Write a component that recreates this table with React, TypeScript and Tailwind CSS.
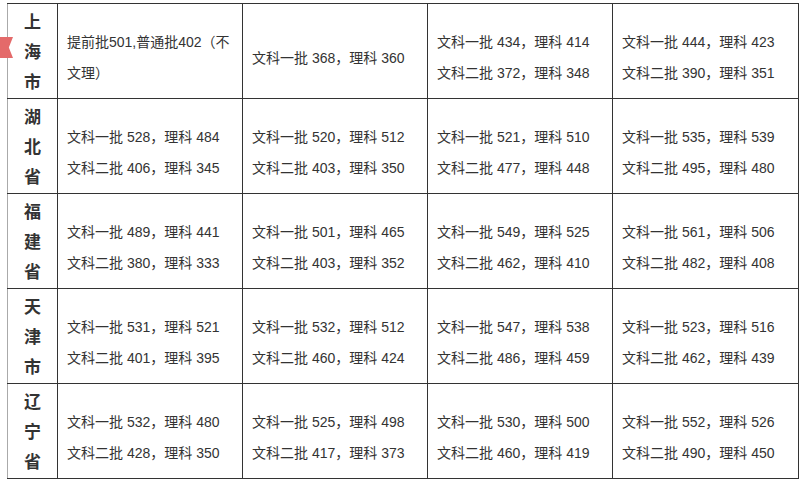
import React from 'react'

type Row = {
  name: string[]
  cells: string[][]
}

const rows: Row[] = [
  {
    name: ['上', '海', '市'],
    cells: [
      ['提前批501,普通批402（不文理）'],
      ['文科一批 368，理科 360'],
      ['文科一批 434，理科 414', '文科二批 372，理科 348'],
      ['文科一批 444，理科 423', '文科二批 390，理科 351'],
    ],
  },
  {
    name: ['湖', '北', '省'],
    cells: [
      ['文科一批 528，理科 484', '文科二批 406，理科 345'],
      ['文科一批 520，理科 512', '文科二批 403，理科 350'],
      ['文科一批 521，理科 510', '文科二批 477，理科 448'],
      ['文科一批 535，理科 539', '文科二批 495，理科 480'],
    ],
  },
  {
    name: ['福', '建', '省'],
    cells: [
      ['文科一批 489，理科 441', '文科二批 380，理科 333'],
      ['文科一批 501，理科 465', '文科二批 403，理科 352'],
      ['文科一批 549，理科 525', '文科二批 462，理科 410'],
      ['文科一批 561，理科 506', '文科二批 482，理科 408'],
    ],
  },
  {
    name: ['天', '津', '市'],
    cells: [
      ['文科一批 531，理科 521', '文科二批 401，理科 395'],
      ['文科一批 532，理科 512', '文科二批 460，理科 424'],
      ['文科一批 547，理科 538', '文科二批 486，理科 459'],
      ['文科一批 523，理科 516', '文科二批 462，理科 439'],
    ],
  },
  {
    name: ['辽', '宁', '省'],
    cells: [
      ['文科一批 532，理科 480', '文科二批 428，理科 350'],
      ['文科一批 525，理科 498', '文科二批 417，理科 373'],
      ['文科一批 530，理科 500', '文科二批 460，理科 419'],
      ['文科一批 552，理科 526', '文科二批 490，理科 450'],
    ],
  },
]

export default function App() {
  return (
    <div className="relative w-[803px] h-[481px] overflow-hidden bg-white text-[#333] font-['Liberation_Sans','Noto_Sans_CJK_SC',sans-serif]">
      {/* red ribbon tag on the left edge */}
      <div className="absolute left-0 top-[37px] w-[13px] h-[21px] bg-[#e46a6a] [clip-path:polygon(0_0,100%_0,68%_50%,100%_100%,0_100%)]" />

      <div className="pt-[3px] pl-[7px]">
        <table className="border-collapse table-fixed border-t border-l border-t-[#aaa] border-l-[#aaa]">
          <colgroup>
            <col className="w-[50px]" />
            <col className="w-[185px]" />
            <col className="w-[185px]" />
            <col className="w-[185px]" />
            <col className="w-[186px]" />
          </colgroup>
          <tbody>
            {rows.map((row, i) => (
              <tr key={i} className="h-[95px]">
                <td className="border border-[#333] border-l-[#aaa] align-top p-0 pt-[4px] text-center">
                  {row.name.map((c) => (
                    <div key={c} className="text-[17px] leading-[30px] font-bold text-[#333]">
                      {c}
                    </div>
                  ))}
                </td>
                {row.cells.map((lines, j) => (
                  <td
                    key={j}
                    className="border border-[#333] align-middle pl-[9px] pr-[8px] pt-[14px] pb-0 text-[14px] leading-[31px]"
                  >
                    {lines.map((l, k) => (
                      <div key={k}>{l}</div>
                    ))}
                  </td>
                ))}
              </tr>
            ))}
          </tbody>
        </table>
      </div>
    </div>
  )
}
